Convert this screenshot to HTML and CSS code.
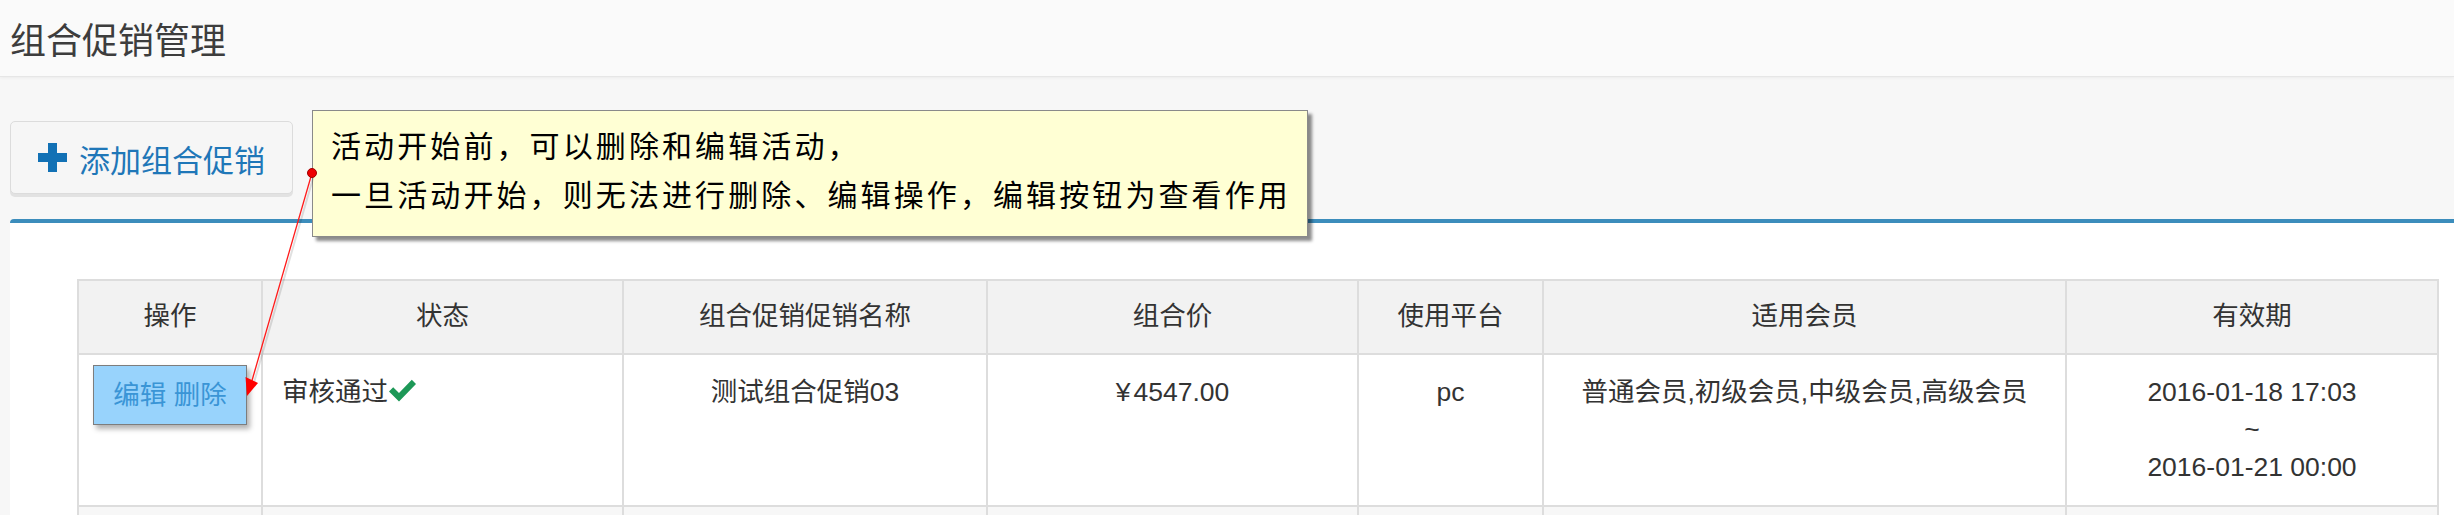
FILE: index.html
```html
<!DOCTYPE html>
<html lang="zh-CN">
<head>
<meta charset="utf-8">
<title>组合促销管理</title>
<link rel="stylesheet" href="styles.css">
</head>
<body>
<header class="page-header">
  <h1 class="page-title">组合促销管理</h1>
</header>
<main class="content">
  <div class="toolbar">
    <a class="btn-add" href="#">
      <svg class="plus" width="29" height="29" viewBox="0 0 29 29"><path d="M10 0h9v10h10v9H19v10h-9V19H0v-9h10z" fill="#1271b5"/></svg>
      <span>添加组合促销</span>
    </a>
  </div>
  <section class="box">
    <table class="grid">
      <colgroup>
        <col style="width:184px"><col style="width:361px"><col style="width:364px"><col style="width:371px"><col style="width:185px"><col style="width:523px"><col style="width:372px">
      </colgroup>
      <thead>
        <tr><th>操作</th><th>状态</th><th>组合促销促销名称</th><th>组合价</th><th>使用平台</th><th>适用会员</th><th>有效期</th></tr>
      </thead>
      <tbody>
        <tr>
          <td class="c"><span class="ops">编辑 删除</span></td>
          <td class="l">审核通过<svg class="ok" width="27" height="24" viewBox="0 0 27 24"><path d="M0 12.5L4.2 8.3L10 14L22.8 0.8L27 5L10 22.5z" fill="#1d9857"/></svg></td>
          <td class="c">测试组合促销03</td>
          <td class="c"><span class="yen">¥</span>4547.00</td>
          <td class="c">pc</td>
          <td class="c">普通会员,初级会员,中级会员,高级会员</td>
          <td class="c">2016-01-18 17:03<br>~<br>2016-01-21 00:00</td>
        </tr>
        <tr class="alt">
          <td class="c">&nbsp;</td><td>&nbsp;</td><td>&nbsp;</td><td>&nbsp;</td><td>&nbsp;</td><td>&nbsp;</td><td>&nbsp;</td>
        </tr>
      </tbody>
    </table>
  </section>
</main>
<div class="callout">
  <p>活动开始前，可以删除和编辑活动，</p>
  <p>一旦活动开始，则无法进行删除、编辑操作，编辑按钮为查看作用</p>
</div>
<svg class="pointer" width="2454" height="515" viewBox="0 0 2454 515">
  <line x1="314" y1="175" x2="253" y2="386" stroke="rgba(0,0,0,0.12)" stroke-width="2"/>
  <line x1="312" y1="173" x2="251" y2="384" stroke="#ff1a1a" stroke-width="1.3"/>
  <polygon points="245.5,377 258,383 247,396" fill="#ff0000"/>
  <circle cx="312" cy="173" r="4.5" fill="#ee0000" stroke="#a00000" stroke-width="1"/>
</svg>
</body>
</html>
```
FILE: styles.css
```css
html, body {
  margin: 0;
  padding: 0;
}
body {
  width: 2454px;
  height: 515px;
  overflow: hidden;
  position: relative;
  background: #f7f7f7;
  font-family: "Liberation Sans", Arial, "Noto Sans CJK SC", sans-serif;
  color: #333;
}
.page-header {
  height: 77px;
  box-sizing: border-box;
  background: #fafafa;
  border-bottom: 1px solid #e6e6e6;
  box-shadow: 0 1px 3px rgba(0,0,0,0.05);
  display: flex;
  align-items: center;
  padding-left: 10px;
}
.page-title {
  margin: 0;
  font-family: "Noto Sans CJK SC", sans-serif;
  font-weight: 400;
  font-size: 36px;
  color: #3d3d3d;
  line-height: 1;
}
.content {
  padding: 44px 0 0 10px;
}
.toolbar {
  display: flex;
}
.btn-add {
  box-sizing: border-box;
  width: 283px;
  height: 73px;
  display: flex;
  align-items: center;
  padding-left: 27px;
  gap: 12px;
  border: 1px solid #dcdcdc;
  border-radius: 5px;
  background: #f6f6f6;
  box-shadow: 0 3px 0 #e2e2e2;
  text-decoration: none;
  color: #1f77b8;
  font-family: "Noto Sans CJK SC", sans-serif;
  font-size: 31px;
}
.btn-add span {
  position: relative;
  top: 1px;
}
.plus {
  flex: none;
}
.box {
  margin-top: 25px;
  width: 2470px;
  background: #fff;
  border-top: 4px solid #3c8dbc;
  border-top-left-radius: 4px;
  padding: 56px 0 40px 67px;
}
.grid {
  border-collapse: collapse;
  table-layout: fixed;
  width: 2360px;
  font-size: 26.5px;
  line-height: 37.5px;
}
.grid th, .grid td {
  border: 2px solid #dddddd;
  padding: 17px 8px;
  font-family: "Liberation Sans", Arial, "Noto Sans CJK SC", sans-serif;
  font-weight: 400;
  vertical-align: top;
}
.grid th {
  background: #f2f2f2;
  text-align: center;
}
.grid td {
  padding: 19px 8px;
}
.grid td.c {
  text-align: center;
}
.grid td.l {
  text-align: left;
  padding-left: 19px;
}
.grid tr.alt td {
  background: #f7f7f7;
}
.yen {
  margin-right: 3px;
}
.ok {
  vertical-align: -2px;
  margin-left: 1px;
}
.ops {
  display: inline;
  padding: 14px 19px 14px 19px;
  background: #98d3fc;
  border: 1px solid #7d7d7d;
  box-shadow: 3px 4px 5px rgba(0,0,0,0.3);
  color: #3a95d6;
  position: relative;
  top: 3px;
}
.callout {
  position: absolute;
  left: 312px;
  top: 110px;
  width: 996px;
  height: 127px;
  box-sizing: border-box;
  background: #ffffd4;
  border: 1px solid #8a8a8a;
  box-shadow: 4px 4px 3px rgba(0,0,0,0.45);
  padding: 9px 0 0 18px;
  font-family: "Noto Sans CJK SC", sans-serif;
  font-size: 30px;
  font-weight: 400;
  letter-spacing: 3.1px;
  line-height: 49px;
  color: #000;
}
.callout p {
  margin: 0;
  white-space: nowrap;
}
.pointer {
  position: absolute;
  left: 0;
  top: 0;
  pointer-events: none;
}
```
